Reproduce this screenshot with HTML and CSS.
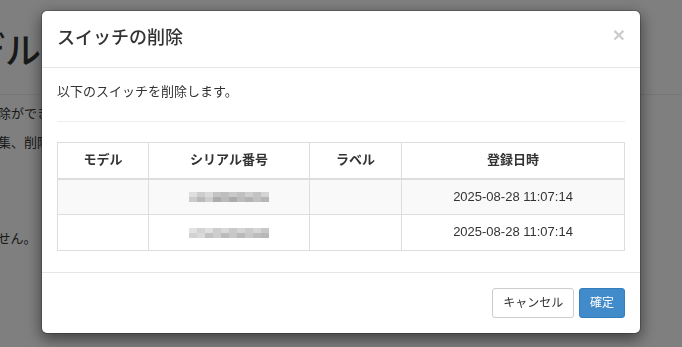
FILE: index.html
```html
<!DOCTYPE html>
<html lang="ja">
<head>
    <meta charset="UTF-8">
    <meta name="viewport" content="width=device-width, initial-scale=1.0">
    <title>スイッチの削除</title>
    <link rel="stylesheet" href="styles.css">
</head>
<body>

<!-- Page behind the dialog -->
<div class="page">
    <h1 class="page-title">モデル一覧</h1>
    <p>モデルの削除ができます。</p>
    <p>の登録、編集、削除を行います。</p>
    <p class="note">削除できません。</p>
</div>

<div class="modal-backdrop"></div>

<!-- Delete dialog -->
<div class="modal">
    <div class="modal-dialog">
        <div class="modal-content">
            <div class="modal-header">
                <button type="button" class="close">&times;</button>
                <h4 class="modal-title">スイッチの削除</h4>
            </div>
            <div class="modal-body">
                <p>以下のスイッチを削除します。</p>
                <hr>
                <table class="table">
                    <thead>
                        <tr>
                            <th class="col-model">モデル</th>
                            <th class="col-serial">シリアル番号</th>
                            <th class="col-label">ラベル</th>
                            <th>登録日時</th>
                        </tr>
                    </thead>
                    <tbody>
                        <tr class="striped">
                            <td></td>
                            <td><span class="mosaic mosaic-a"></span></td>
                            <td></td>
                            <td>2025-08-28 11:07:14</td>
                        </tr>
                        <tr>
                            <td></td>
                            <td><span class="mosaic mosaic-b"></span></td>
                            <td></td>
                            <td>2025-08-28 11:07:14</td>
                        </tr>
                    </tbody>
                </table>
            </div>
            <div class="modal-footer">
                <button type="button" class="btn btn-default">キャンセル</button>
                <button type="button" class="btn btn-primary">確定</button>
            </div>
        </div>
    </div>
</div>

</body>
</html>
```

FILE: styles.css
```css
body {
    font-family: "Liberation Sans", Arial, "Noto Sans CJK JP", sans-serif;
    font-size: 13px;
    line-height: 1.42857;
    color: #333;
    background-color: #fff;
    margin: 0;
    overflow: hidden;
}

/* page behind the dialog */
.page {
    margin-left: -67px;
}

.page-title {
    font-size: 36px;
    font-weight: 500;
    line-height: 40px;
    margin: 32px 0 0;
    padding-bottom: 22px;
    border-bottom: 1px solid #eee;
    white-space: nowrap;
}

.page p {
    margin: 10px 0;
    white-space: nowrap;
}

.page .note {
    margin-top: 78px;
}

.modal-backdrop {
    position: fixed;
    top: 0;
    right: 0;
    bottom: 0;
    left: 0;
    background-color: rgba(0, 0, 0, 0.5);
}

.modal {
    position: fixed;
    top: 0;
    right: 0;
    bottom: 0;
    left: 0;
}

.modal-dialog {
    width: 600px;
    margin: 10px auto;
}

.modal-content {
    background-color: #fff;
    border: 1px solid rgba(0, 0, 0, 0.2);
    border-radius: 6px;
    box-shadow: 0 5px 15px rgba(0, 0, 0, 0.5);
    background-clip: padding-box;
}

.modal-header {
    padding: 15px;
    border-bottom: 1px solid #e5e5e5;
}

.modal-title {
    margin: 0;
    font-size: 18px;
    font-weight: 500;
    line-height: 1.42857;
}

.close {
    float: right;
    padding: 0;
    margin-top: -2px;
    border: 0;
    background: transparent;
    font-family: "Liberation Sans", Arial, sans-serif;
    font-size: 21px;
    font-weight: bold;
    line-height: 1;
    color: #000;
    opacity: 0.2;
    cursor: pointer;
}

.modal-body {
    padding: 15px;
}

.modal-body p {
    margin: 0 0 10px;
}

hr {
    margin: 20px 0;
    border: 0;
    border-top: 1px solid #eee;
}

.table {
    width: 100%;
    border-collapse: collapse;
    border: 1px solid #ddd;
    margin-bottom: 6px;
}

.table th,
.table td {
    padding: 8px;
    border: 1px solid #ddd;
    text-align: center;
    line-height: 1.42857;
}

.table th {
    font-weight: bold;
    border-bottom-width: 2px;
}

.col-model {
    width: 74px;
}

.col-serial {
    width: 144px;
}

.col-label {
    width: 75px;
}

.table .striped {
    background-color: #f9f9f9;
}

/* blurred serial numbers */
.mosaic {
    display: inline-block;
    vertical-align: middle;
    width: 80px;
    height: 10px;
    background-repeat: no-repeat;
    background-size: 100% 5px, 100% 5px;
    background-position: 0 0, 0 5px;
}

.mosaic-a {
    background-image:
        linear-gradient(to right, #dedede 0 10%, #cdcdcd 10% 20%, #d9d9d9 20% 30%, #c4c4c4 30% 40%, #bebebe 40% 50%, #c9c9c9 50% 60%, #c0c0c0 60% 70%, #cecece 70% 80%, #c3c3c3 80% 90%, #d4d4d4 90% 100%),
        linear-gradient(to right, #cbcbcb 0 10%, #b9b9b9 10% 20%, #cdcdcd 20% 30%, #acacac 30% 40%, #bababa 40% 50%, #ababab 50% 60%, #bcbcbc 60% 70%, #b3b3b3 70% 80%, #c1c1c1 80% 90%, #b6b6b6 90% 100%);
}

.mosaic-b {
    background-image:
        linear-gradient(to right, #e2e2e2 0 10%, #d3d3d3 10% 20%, #e0e0e0 20% 30%, #cdcdcd 30% 40%, #d8d8d8 40% 50%, #c9c9c9 50% 60%, #d5d5d5 60% 70%, #cbcbcb 70% 80%, #d6d6d6 80% 90%, #c8c8c8 90% 100%),
        linear-gradient(to right, #d2d2d2 0 10%, #dadada 10% 20%, #c1c1c1 20% 30%, #cdcdcd 30% 40%, #bbbbbb 40% 50%, #c7c7c7 50% 60%, #b9b9b9 60% 70%, #c8c8c8 70% 80%, #bdbdbd 80% 90%, #b8b8b8 90% 100%);
}

.modal-footer {
    padding: 15px;
    text-align: right;
    border-top: 1px solid #e5e5e5;
}

.btn {
    display: inline-block;
    padding: 5px 10px;
    font-family: inherit;
    font-size: 12px;
    line-height: 1.5;
    border: 1px solid transparent;
    border-radius: 3px;
    cursor: pointer;
    vertical-align: middle;
}

.btn + .btn {
    margin-left: 1px;
}

.btn-default {
    color: #333;
    background-color: #fff;
    border-color: #ccc;
}

.btn-primary {
    color: #fff;
    background-color: #428bca;
    border-color: #357ebd;
}
```
